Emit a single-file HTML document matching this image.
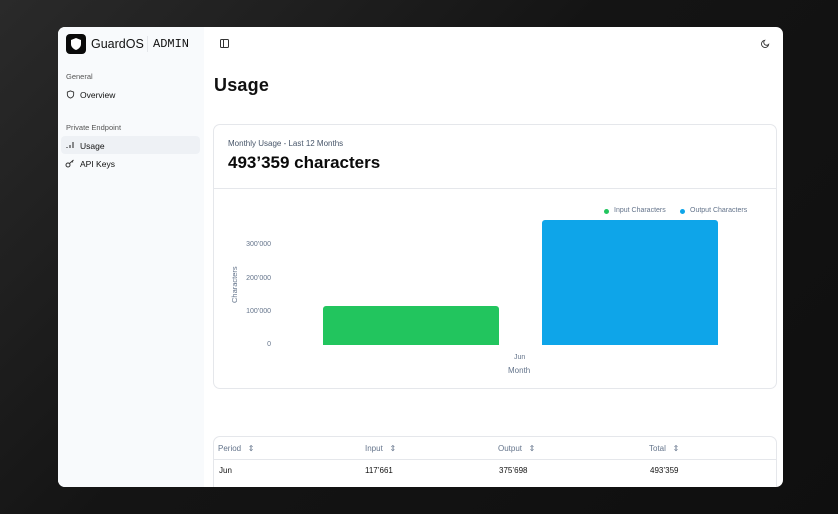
<!DOCTYPE html>
<html><head><style>
*{box-sizing:border-box;margin:0;padding:0}
body{width:838px;height:514px;overflow:hidden;background:linear-gradient(135deg,#2a2a2a 0%,#141414 45%,#0f0f0f 100%);font-family:"Liberation Sans",sans-serif;position:relative}
.win{position:absolute;left:58px;top:27px;width:725px;height:460px;background:#fff;border-radius:7px;overflow:hidden}
.side{position:absolute;left:0;top:0;width:146px;height:100%;background:#f8fafc}
.logo{position:absolute;left:8px;top:7px;width:20px;height:20px;background:#0a0a0a;border-radius:4px}
.t{position:absolute;white-space:nowrap}
.main{position:absolute;left:146px;top:0;right:0;bottom:0}
.card{position:absolute;border:1px solid #e5e7eb;border-radius:7px;background:#fff}
.sm{font-size:8px;color:#64748b}
.yl{position:absolute;width:40px;text-align:right;font-size:7px;color:#64748b}
</style></head><body>
<div class="win">
 <div class="side">
  <div class="logo"><svg width="20" height="20" viewBox="0 0 20 20"><path d="M10 4 L15 6 V10 C15 13 12.5 15 10 16 C7.5 15 5 13 5 10 V6 Z" fill="#fff"/></svg></div>
  <div class="t" style="left:33px;top:10px;font-size:12.5px;color:#111">GuardOS</div>
  <div style="position:absolute;left:89px;top:9px;width:1px;height:16px;background:#e5e7eb"></div>
  <div class="t" style="left:95px;top:10px;font-size:12px;font-family:'Liberation Mono',monospace;color:#111">ADMIN</div>
  <div class="t" style="left:8px;top:45px;font-size:7.5px;color:#555">General</div>
  <svg class="t" style="left:8px;top:63px" width="9" height="9" viewBox="0 0 10 10"><path d="M5 1 L8.5 2.3 V5 C8.5 7 7 8.3 5 9 C3 8.3 1.5 7 1.5 5 V2.3 Z" fill="none" stroke="#333" stroke-width="1"/></svg>
  <div class="t" style="left:22px;top:63px;font-size:8.5px;color:#111">Overview</div>
  <div class="t" style="left:8px;top:96px;font-size:7.5px;color:#555">Private Endpoint</div>
  <div style="position:absolute;left:3px;top:109px;width:139px;height:18px;background:#eef1f5;border-radius:4px"></div>
  <svg class="t" style="left:8px;top:114px" width="8" height="8" viewBox="0 0 8 8"><path d="M1 7V6M4 7V4M7 7V1" stroke="#333" stroke-width="1.1"/></svg>
  <div class="t" style="left:22px;top:114px;font-size:8.5px;color:#111">Usage</div>
  <svg class="t" style="left:7px;top:132px" width="10" height="9" viewBox="0 0 10 9"><circle cx="3" cy="6" r="2" fill="none" stroke="#333"/><path d="M4.5 4.5L8.5 1M7 2.3l1 1" stroke="#333"/></svg>
  <div class="t" style="left:22px;top:132px;font-size:8.5px;color:#111">API Keys</div>
 </div>
 <div class="main">
  <svg class="t" style="left:16px;top:12px" width="9" height="9" viewBox="0 0 9 9"><rect x="0.5" y="0.5" width="8" height="8" rx="1" fill="none" stroke="#333"/><path d="M3.5 0.5V8.5" stroke="#333"/></svg>
  <svg class="t" style="left:557px;top:12px" width="9" height="9" viewBox="0 0 10 10"><path d="M8.5 6A4 4 0 1 1 4 1.5 3 3 0 0 0 8.5 6Z" fill="none" stroke="#333"/></svg>
  <div class="t" style="left:10px;top:48px;font-size:18px;font-weight:bold;color:#111;letter-spacing:0.2px">Usage</div>
  <div class="card" style="left:9px;top:97px;width:564px;height:265px">
   <div class="t" style="left:14px;top:14px;font-size:8px;color:#475569">Monthly Usage - Last 12 Months</div>
   <div class="t" style="left:14px;top:28px;font-size:17px;font-weight:bold;color:#0a0a0a">493’359 characters</div>
   <div style="position:absolute;left:0;right:0;top:63px;height:1px;background:#e5e7eb"></div>
   <div class="t" style="left:390px;top:84px;width:5px;height:5px;border-radius:50%;background:#22c55e"></div>
   <div class="t sm" style="left:400px;top:82px;font-size:7px">Input Characters</div>
   <div class="t" style="left:466px;top:84px;width:5px;height:5px;border-radius:50%;background:#0ea5e9"></div>
   <div class="t sm" style="left:476px;top:82px;font-size:7px">Output Characters</div>
   <div class="yl" style="left:17px;top:116px">300’000</div>
   <div class="yl" style="left:17px;top:150px">200’000</div>
   <div class="yl" style="left:17px;top:183px">100’000</div>
   <div class="yl" style="left:17px;top:216px">0</div>
   <div class="t sm" style="left:16px;top:178px;font-size:7.5px;transform:rotate(-90deg);transform-origin:left top">Characters</div>
   <div style="position:absolute;left:109px;top:181px;width:176px;height:39px;background:#22c55e;border-radius:3px 3px 0 0"></div>
   <div style="position:absolute;left:328px;top:95px;width:176px;height:125px;background:#0ea5e9;border-radius:3px 3px 0 0"></div>
   <div class="t sm" style="left:300px;top:229px;font-size:7px">Jun</div>
   <div class="t sm" style="left:294px;top:241px;font-size:8px">Month</div>
  </div>
  <div class="card" style="left:9px;top:409px;width:564px;height:60px">
   <div style="position:absolute;left:0;right:0;top:22px;height:1px;background:#e5e7eb"></div>
   <div class="t sm" style="left:4px;top:7px;font-size:8px">Period &nbsp;&nbsp;⇕</div>
   <div class="t sm" style="left:151px;top:7px;font-size:8px">Input &nbsp;&nbsp;⇕</div>
   <div class="t sm" style="left:284px;top:7px;font-size:8px">Output &nbsp;&nbsp;⇕</div>
   <div class="t sm" style="left:435px;top:7px;font-size:8px">Total &nbsp;&nbsp;⇕</div>
   <div class="t" style="left:5px;top:29px;font-size:8px;color:#111">Jun</div>
   <div class="t" style="left:151px;top:29px;font-size:8px;color:#111">117’661</div>
   <div class="t" style="left:285px;top:29px;font-size:8px;color:#111">375’698</div>
   <div class="t" style="left:436px;top:29px;font-size:8px;color:#111">493’359</div>
  </div>
 </div>
</div>
</body></html>
